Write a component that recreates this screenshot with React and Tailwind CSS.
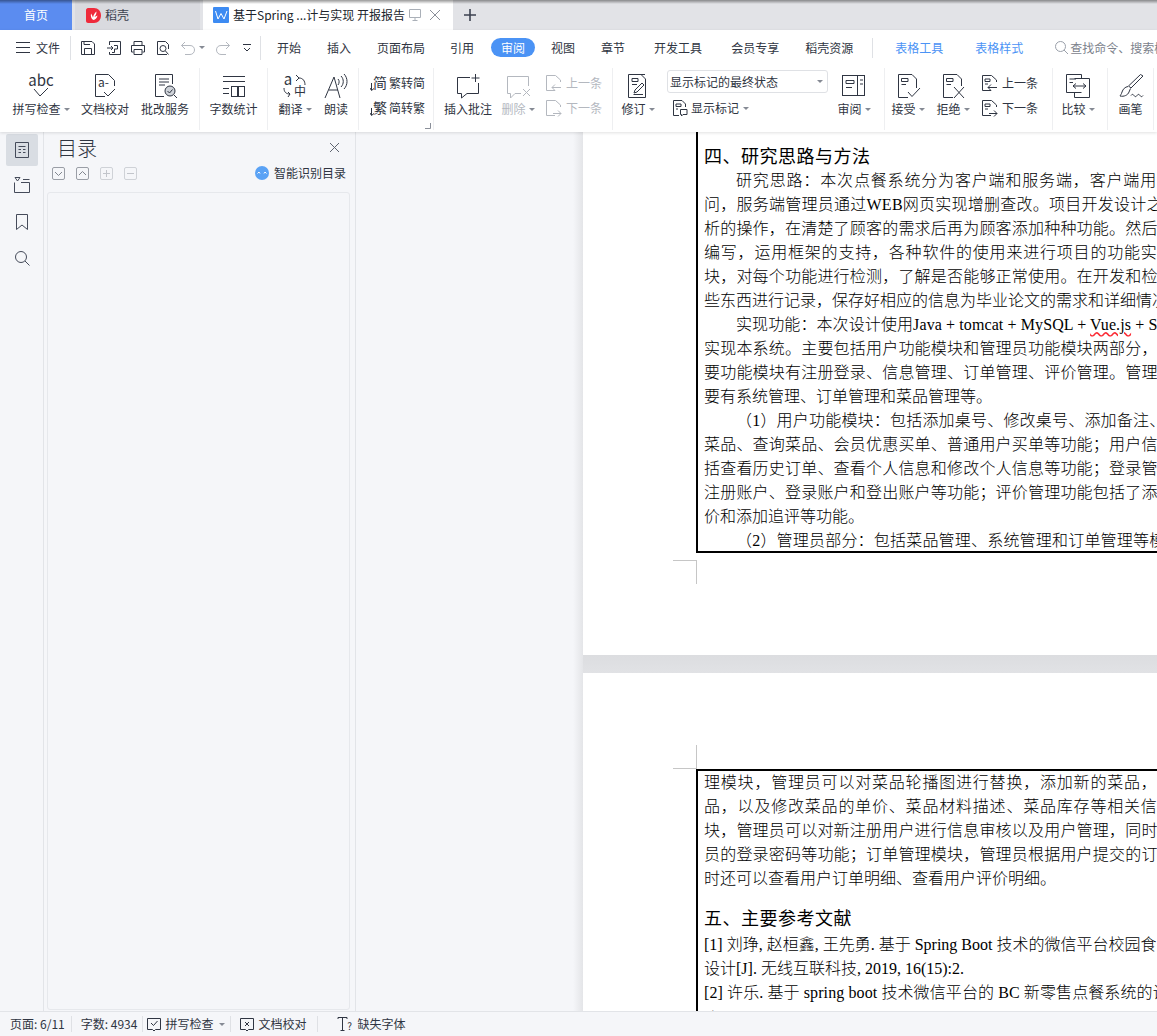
import React from "react";

const Ico = ({ w = 26, h = 26, c = "#2f3542", children, cls = "" }) => (
  <svg width={w} height={h} viewBox={`0 0 ${w} ${h}`} fill="none" stroke={c} strokeWidth="1" className={`shrink-0 ${cls}`}>
    {children}
  </svg>
);
const T = ({ x, y, s = 11, c = "#2f3542", a = "middle", children }) => (
  <text x={x} y={y} fontSize={s} fill={c} stroke="none" textAnchor={a} fontFamily="'Noto Sans CJK SC','Liberation Sans',sans-serif">{children}</text>
);
const Caret = ({ cls = "ml-[3px]" }) => (
  <span className={`inline-block shrink-0 w-0 h-0 border-x-[3px] border-t-[3px] border-x-transparent border-t-[#858a94] ${cls}`} />
);
const Sep = () => <div className="w-px h-[62px] mt-[3px] bg-[#eeeff1] shrink-0" />;

const RBtn = ({ w, label, caret, gray, children }) => (
  <div className={`${w} shrink-0 flex flex-col items-center pt-[8px]`}>
    <div className="h-[26px] flex items-center justify-center">{children}</div>
    <div className={`h-[20px] flex items-center whitespace-nowrap ${gray ? "text-[#b4b8bf]" : "text-[#2f3542]"}`}>
      {label}
      {caret && <Caret />}
    </div>
  </div>
);

const DocBase = ({ c = "#2f3542" }) => (
  <path d="M13 23.5H3.5V1.5H16.5L22.5 7.5V13" stroke={c} />
);

const IconSpell = () => (
  <Ico>
    <T x={13} y={13} s={15}>abc</T>
    <path d="M6 16L12 23L20 15" />
  </Ico>
);
const IconProof = () => (
  <Ico>
    <DocBase />
    <T x={6} y={14} s={12} a="start">a-</T>
    <path d="M12 19L16 23L23 16" />
  </Ico>
);
const IconService = () => (
  <Ico>
    <path d="M12 23.5H3.5V1.5H20.5V11" />
    <path d="M7 6H17M7 9H17M7 12H13" />
    <circle cx="18" cy="18" r="5" fill="#cfd3d9" />
    <path d="M15.5 18L17.5 20L20.5 16.5M22 22L25 25" />
  </Ico>
);
const IconCount = () => (
  <Ico>
    <path d="M2 3.5H24M2 8.5H24M2 15.5H8M2 20.5H8" />
    <rect x="10.5" y="13.5" width="6" height="10" />
    <rect x="17.5" y="13.5" width="6" height="10" />
  </Ico>
);
const IconTranslate = () => (
  <Ico>
    <T x={6} y={12} s={15}>a</T>
    <T x={18} y={23} s={12}>中</T>
    <path d="M14 8L17 5L14 2M17 5C21 5 23 8 23 12" />
    <path d="M2 15C2 19 4 21 8 21M6 19L8 21L6 24" />
  </Ico>
);
const IconRead = () => (
  <Ico>
    <path d="M2 25L11 4L17 25M6 17H15" />
    <path d="M15 6C16.5 7.5 16.5 10 15 12M18 3C21 6 21 11 18 14M21 1C25 5 25 12 21 16" />
  </Ico>
);
const IconFan = ({ g }) => (
  <Ico w={18} h={20}>
    <T x={10} y={15} s={14}>{g}</T>
    <path d="M1.5 10V17M0 15L1.5 17.5L4 15.5" />
  </Ico>
);
const IconComment = () => (
  <Ico>
    <path d="M15 4.5H2.5V20.5H6.5V25L12 20.5H23.5V10" />
    <path d="M20.5 1V9M16.5 5H24.5" />
  </Ico>
);
const IconDelete = () => (
  <Ico c="#b4b8bf">
    <path d="M16 20.5H10L5.5 25V20.5H2.5V3.5H23.5V13" />
    <path d="M18 16L25 23M25 16L18 23" />
  </Ico>
);
const IconPrevNext = ({ next, c = "#2f3542", lines }) => (
  <Ico w={17} h={18} c={c}>
    <path d="M10 16.5H1.5V1.5H10.5L15.5 6V8" />
    {lines && <path d="M4 5H9V7.5H4ZM4 10H7" />}
    {next ? <path d="M8 14.5H16M13 11.5L16 14.5L13 17.5" /> : <path d="M16 13.5H7M10 10.5L7 13.5L10 16.5" />}
  </Ico>
);
const IconRevise = () => (
  <Ico>
    <path d="M20 1.5H3.5V24.5H20.5V6L16 1.5" />
    <path d="M7 5.5H13V8.5H7ZM7 11.5H12" />
    <path d="M9 20L10 17L17 10L19 12L12 19ZM8.5 21.5H18" />
  </Ico>
);
const IconPanes = () => (
  <Ico>
    <rect x="1.5" y="2.5" width="22" height="20" />
    <path d="M16.5 2.5V22.5M19 7H22M19 11H22" />
    <path d="M5 7.5H13V10.5H5ZM5 14.5H11" />
  </Ico>
);
const IconAccept = () => (
  <Ico>
    <path d="M13 24.5H3.5V1.5H17L21.5 6V15" />
    <path d="M6.5 5.5H13V8.5H6.5ZM6.5 11.5H11" />
    <path d="M13 19L17 23.5L25 15" />
  </Ico>
);
const IconReject = () => (
  <Ico>
    <path d="M13 24.5H3.5V1.5H17L21.5 6V13" />
    <path d="M6.5 5.5H13V8.5H6.5ZM6.5 11.5H11" />
    <path d="M14 14L24 25M24 14L14 25" />
  </Ico>
);
const IconCompare = () => (
  <Ico>
    <path d="M16.5 19.5H1.5V1.5H16.5V5" />
    <path d="M9.5 5.5H24.5V24.5H9.5V19" />
    <path d="M4.5 6H11M4.5 9.5H8" />
    <path d="M8 13H21M11 10.5L8 13L11 15.5M18 10.5L21 13L18 15.5" />
  </Ico>
);
const IconBrush = () => (
  <Ico>
    <path d="M22.5 1.5L25 3L13 15L10.5 13Z" />
    <path d="M10 13.5C7 14 5 16 4 19C3.5 21 2.5 22 2 23C6 24 10 22 11 19L12.5 15.5" />
    <path d="M13 22.5C14 21 15 21 16 22.5C17 24 18 24 19 22.5C20 21 21 21 22 22.5C23 24 24 24 25 22.5" />
  </Ico>
);

const MenuTab = ({ ml, children, blue }) => (
  <span className={`${ml} shrink-0 whitespace-nowrap ${blue ? "text-[#4b93f5]" : "text-[#2f3542]"}`}>{children}</span>
);

const Ribbon = () => (
  <div className="relative z-10 shrink-0 bg-white shadow-[0_1px_3px_rgba(0,0,0,0.12)] h-[102px] text-[12px] overflow-hidden">
    <div className="h-[35px] flex items-center pl-[16px]">
      <svg width="14" height="11" viewBox="0 0 14 11" fill="none" stroke="#2f3542" className="shrink-0"><path d="M0 .5H14M0 5.5H14M0 10.5H14" /></svg>
      <span className="ml-[6px] shrink-0 whitespace-nowrap text-[#2f3542]">文件</span>
      <div className="ml-[10px] w-px h-[24px] shrink-0 bg-[#dfe1e5]" />
      <div className="ml-[9px] shrink-0 flex items-center">
        <Ico w={16} h={16}><path d="M1.5 1.5H12L14.5 4V14.5H1.5ZM4.5 14.5V8.5H11.5V14.5M4 1.5V4.5H10" /></Ico>
        <Ico w={16} h={16} cls="ml-[10px]"><path d="M3.5 5V1.5H14.5V14.5H3.5V12M1 8H7M5 6L7 8L5 10M8 5.5H11.5V9H8.5V12.5H6" /></Ico>
        <Ico w={16} h={16} cls="ml-[8px]"><path d="M4 5V1.5H12V5M3.5 12H1.5V5.5H14.5V12H12.5M4 9.5H12V14.5H4Z" /></Ico>
        <Ico w={16} h={16} cls="ml-[9px]"><path d="M12 14.5H2.5V1.5H10.5L13.5 4.5V9" /><circle cx="8" cy="8.5" r="3" /><path d="M10.5 11L13.5 14.5" /></Ico>
        <Ico w={16} h={16} c="#b4b8bf" cls="ml-[9px]"><path d="M5 2L1.5 5.5L5 9M1.5 5.5H10C13 5.5 14.5 7.5 14.5 10C14.5 12.5 12.5 14.5 10 14.5H5" /></Ico>
        <Caret cls="ml-[3px]" />
        <Ico w={16} h={16} c="#b4b8bf" cls="ml-[10px]"><path d="M11 2L14.5 5.5L11 9M14.5 5.5H6C3 5.5 1.5 7.5 1.5 10C1.5 12.5 3.5 14.5 6 14.5H11" /></Ico>
        <Ico w={10} h={10} c="#2f3542" cls="ml-[11px]"><path d="M1 1.5H9M2 5L5 8L8 5" /></Ico>
      </div>
      <div className="ml-[8px] w-px h-[24px] shrink-0 bg-[#dfe1e5]" />
      <MenuTab ml="ml-[16px]">开始</MenuTab>
      <MenuTab ml="ml-[26px]">插入</MenuTab>
      <MenuTab ml="ml-[26px]">页面布局</MenuTab>
      <MenuTab ml="ml-[25px]">引用</MenuTab>
      <span className="ml-[17px] shrink-0 w-[44px] h-[19px] rounded-full bg-[#4b93f5] text-white flex items-center justify-center">审阅</span>
      <MenuTab ml="ml-[16px]">视图</MenuTab>
      <MenuTab ml="ml-[26px]">章节</MenuTab>
      <MenuTab ml="ml-[29px]">开发工具</MenuTab>
      <MenuTab ml="ml-[29px]">会员专享</MenuTab>
      <MenuTab ml="ml-[26px]">稻壳资源</MenuTab>
      <div className="ml-[19px] w-px h-[20px] bg-[#dfe1e5] shrink-0" />
      <MenuTab ml="ml-[22px]" blue>表格工具</MenuTab>
      <MenuTab ml="ml-[32px]" blue>表格样式</MenuTab>
      <Ico w={15} h={15} c="#9aa0aa" cls="ml-[31px]"><circle cx="6.5" cy="6.5" r="5" /><path d="M10 10L14 14" /></Ico>
      <span className="ml-[1px] shrink-0 text-[#7c828c] whitespace-nowrap">查找命令、搜索模板</span>
    </div>
    <div className="h-[67px] flex items-start">
      <div className="w-[9px] shrink-0" />
      <RBtn w="w-[64px]" label="拼写检查" caret><IconSpell /></RBtn>
      <RBtn w="w-[64px]" label="文档校对"><IconProof /></RBtn>
      <RBtn w="w-[56px]" label="批改服务"><IconService /></RBtn>
      <div className="w-[6px] shrink-0" />
      <Sep />
      <RBtn w="w-[67px]" label="字数统计"><IconCount /></RBtn>
      <Sep />
      <RBtn w="w-[54px]" label="翻译" caret><IconTranslate /></RBtn>
      <RBtn w="w-[28px]" label="朗读"><IconRead /></RBtn>
      <div className="w-[8px] shrink-0" />
      <Sep />
      <div className="relative w-[74px] shrink-0 pl-[11px] pt-[8px] text-[#2f3542]">
        <div className="h-[20px] flex items-center whitespace-nowrap"><IconFan g="简" /><span className="ml-[1px]">繁转简</span></div>
        <div className="h-[20px] mt-[5px] flex items-center whitespace-nowrap"><IconFan g="繁" /><span className="ml-[1px]">简转繁</span></div>
        <svg width="6" height="6" viewBox="0 0 6 6" fill="none" stroke="#8a8f99" className="absolute left-[66px] top-[58px]"><path d="M5.5 0V5.5H0" /></svg>
      </div>
      <Sep />
      <RBtn w="w-[68px]" label="插入批注"><IconComment /></RBtn>
      <RBtn w="w-[32px]" label="删除" caret gray><IconDelete /></RBtn>
      <div className="w-[78px] shrink-0 pl-[11px] pt-[8px] text-[#b4b8bf]">
        <div className="h-[20px] flex items-center whitespace-nowrap"><IconPrevNext c="#b4b8bf" /><span className="ml-[4px]">上一条</span></div>
        <div className="h-[20px] mt-[5px] flex items-center whitespace-nowrap"><IconPrevNext next c="#b4b8bf" /><span className="ml-[4px]">下一条</span></div>
      </div>
      <Sep />
      <RBtn w="w-[50px]" label="修订" caret><IconRevise /></RBtn>
      <div className="w-[172px] shrink-0 pl-[4px] pt-[5px] text-[#2f3542]">
        <div className="w-[161px] h-[23px] rounded-[3px] border border-[#dfe1e5] flex items-center pl-[2px] pr-[4px] justify-between whitespace-nowrap">
          显示标记的最终状态
          <Caret cls="" />
        </div>
        <div className="h-[20px] mt-[5px] pl-[5px] flex items-center whitespace-nowrap">
          <Ico w={16} h={18}><path d="M7 16.5H1.5V1.5H10L13.5 5V8" /><path d="M4 5H9V7.5H4ZM4 10H6" /><path d="M8.5 10.5H15V15.5H11L9.5 17V15.5H8.5Z" /></Ico>
          <span className="ml-[3px]">显示标记</span>
          <Caret cls="ml-[4px]" />
        </div>
      </div>
      <RBtn w="w-[38px]" label="审阅" caret><IconPanes /></RBtn>
      <div className="w-[11px] shrink-0" />
      <Sep />
      <RBtn w="w-[46px]" label="接受" caret><IconAccept /></RBtn>
      <RBtn w="w-[44px]" label="拒绝" caret><IconReject /></RBtn>
      <div className="w-[77px] shrink-0 pl-[6px] pt-[8px] text-[#2f3542]">
        <div className="h-[20px] flex items-center whitespace-nowrap"><IconPrevNext lines /><span className="ml-[4px]">上一条</span></div>
        <div className="h-[20px] mt-[5px] flex items-center whitespace-nowrap"><IconPrevNext next lines /><span className="ml-[4px]">下一条</span></div>
      </div>
      <Sep />
      <RBtn w="w-[50px]" label="比较" caret><IconCompare /></RBtn>
      <div className="w-[4px] shrink-0" />
      <Sep />
      <RBtn w="w-[45px]" label="画笔"><IconBrush /></RBtn>
      <Sep />
    </div>
  </div>
);

const TabBar = () => (
  <div className="relative shrink-0 h-[30px] bg-[#e2e3e7] flex text-[12px]">
    <div className="w-[72px] bg-[#5b8cf0] text-white flex items-center justify-center">首页</div>
    <div className="ml-[3px] w-[125px] bg-[#d9dadf] flex items-center pl-[11px] text-[#3c4250]">
      <svg width="15" height="15" viewBox="0 0 15 15" className="shrink-0">
        <path d="M0 2C0 1 1 0 2 0H8C12 0 15 3 15 7.5C15 12 12 15 8 15H2C1 15 0 14 0 13Z" fill="#ef2b3c" />
        <path d="M7.5 12C5 11 4.5 8 5 5.5C6 7 6.5 8 7 9.5C7.5 7 8.5 5 10.5 3.5C10.5 6 9.5 7.5 8.5 9C9.5 8.5 10.5 8 11.5 7.5C11 10 9.5 11.5 7.5 12Z" fill="#fff" />
      </svg>
      <span className="ml-[4px]">稻壳</span>
    </div>
    <div className="ml-[3px] w-[250px] bg-white flex items-center pl-[10px] text-[#20242c]">
      <svg width="16" height="16" viewBox="0 0 16 16" className="shrink-0">
        <rect width="16" height="16" rx="1" fill="#3d8bf2" />
        <path d="M2.5 4L5 12L8 6.5L11 12L14 4" fill="none" stroke="#fff" strokeWidth="1" />
      </svg>
      <span className="ml-[4px] whitespace-nowrap">基于Spring ...计与实现 开报报告</span>
      <Ico w={14} h={14} c="#aab0b8" cls="ml-[3px]"><path d="M1.5 1.5H12.5V9.5H1.5ZM7 9.5V12.5M4.5 12.5H9.5" /></Ico>
      <Ico w={12} h={12} c="#8a8f99" cls="ml-[7px]"><path d="M1 1L11 11M11 1L1 11" /></Ico>
    </div>
    <div className="ml-[11px] flex items-center">
      <Ico w={12} h={12} c="#3c4250"><path d="M6 0V12M0 6H12" strokeWidth="1.6" /></Ico>
    </div>
    <div className="absolute inset-x-0 top-0 h-[4px] bg-gradient-to-b from-[#00000066] to-transparent" />
  </div>
);

const SmallBtn = ({ children, c, ml }) => (
  <div className={`${ml} w-[13px] h-[13px] rounded-[2px] border flex items-center justify-center ${c}`}>{children}</div>
);

const LeftNav = () => (
  <div className="w-[44px] shrink-0 border-r border-[#e2e4e8] flex flex-col items-center pt-[2px]">
    <div className="w-[32px] h-[32px] rounded-[2px] bg-[#d9dde3] flex items-center justify-center">
      <Ico w={14} h={16} c="#454b5a"><path d="M.5 .5H13.5V15.5H.5ZM3.5 4.5H10.5M3.5 7.5H6M8 7.5H10.5M3.5 10.5H6M8 10.5H10.5" /></Ico>
    </div>
    <Ico w={16} h={16} c="#454b5a" cls="mt-[11px]"><path d="M.5 5.5V15.5H15.5V5.5H7M9 2.5H15.5M1 .5H6L3.5 4Z" /></Ico>
    <Ico w={12} h={16} c="#454b5a" cls="mt-[21px]"><path d="M.5 .5H11.5V15.5L6 11L.5 15.5Z" /></Ico>
    <Ico w={16} h={16} c="#454b5a" cls="mt-[20px]"><circle cx="7" cy="7" r="5.5" /><path d="M11 11L15.5 15.5" /></Ico>
  </div>
);

const TocPanel = () => (
  <div className="w-[312px] shrink-0 border-r border-[#e2e4e8] flex flex-col pl-[3px] pr-[5px]">
    <div className="h-[30px] shrink-0 flex items-center justify-between pl-[10px] pr-[10px] pt-[1px]">
      <span className="text-[20px] leading-none text-[#2f3542] font-light">目录</span>
      <Ico w={11} h={11} c="#5f6570"><path d="M1 1L10 10M10 1L1 10" /></Ico>
    </div>
    <div className="h-[22px] shrink-0 flex items-center pl-[5px]">
      <SmallBtn c="border-[#9a9ea6]"><Ico w={9} h={9} c="#80858e"><path d="M1 3L4.5 6.5L8 3" /></Ico></SmallBtn>
      <SmallBtn c="border-[#9a9ea6]" ml="ml-[11px]"><Ico w={9} h={9} c="#80858e"><path d="M1 6L4.5 2.5L8 6" /></Ico></SmallBtn>
      <SmallBtn c="border-[#cfd2d7]" ml="ml-[11px]"><Ico w={9} h={9} c="#c2c5cb"><path d="M4.5 1V8M1 4.5H8" /></Ico></SmallBtn>
      <SmallBtn c="border-[#cfd2d7]" ml="ml-[11px]"><Ico w={9} h={9} c="#c2c5cb"><path d="M1 4.5H8" /></Ico></SmallBtn>
      <svg width="14" height="14" viewBox="0 0 14 14" className="ml-[118px] shrink-0">
        <circle cx="7" cy="7" r="7" fill="#5aa2f5" />
        <path d="M2.5 7.5L4 6L5 7.5M9 7.5L10 6L11.5 7.5" stroke="#fff" fill="none" />
      </svg>
      <span className="ml-[5px] text-[12px] text-[#2f3542] whitespace-nowrap">智能识别目录</span>
    </div>
    <div className="flex-1 mt-[8px] mb-px rounded-[3px] border border-[#e6e8ec]" />
  </div>
);

const p1 = [
  ["pl-[32px] tracking-[0.84px]", "研究思路：本次点餐系统分为客户端和服务端，客户端用"],
  ["tracking-[0.25px]", "问，服务端管理员通过WEB网页实现增删查改。项目开发设计之"],
  ["tracking-[0.2px]", "析的操作，在清楚了顾客的需求后再为顾客添加种种功能。然后"],
  ["tracking-[0.8px]", "编写，运用框架的支持，各种软件的使用来进行项目的功能实"],
  ["tracking-[0.2px]", "块，对每个功能进行检测，了解是否能够正常使用。在开发和检"],
  ["tracking-[0px]", "些东西进行记录，保存好相应的信息为毕业论文的需求和详细情况"],
];
const p2 = [
  ["tracking-[0.2px]", "实现本系统。主要包括用户功能模块和管理员功能模块两部分，"],
  ["tracking-[0.2px]", "要功能模块有注册登录、信息管理、订单管理、评价管理。管理"],
  ["tracking-[0px]", "要有系统管理、订单管理和菜品管理等。"],
  ["pl-[32px] tracking-[0.2px]", "（1）用户功能模块：包括添加桌号、修改桌号、添加备注、"],
  ["tracking-[0.2px]", "菜品、查询菜品、会员优惠买单、普通用户买单等功能；用户信"],
  ["tracking-[0.2px]", "括查看历史订单、查看个人信息和修改个人信息等功能；登录管"],
  ["tracking-[0.2px]", "注册账户、登录账户和登出账户等功能；评价管理功能包括了添"],
  ["tracking-[0px]", "价和添加追评等功能。"],
  ["pl-[32px] tracking-[0.2px]", "（2）管理员部分：包括菜品管理、系统管理和订单管理等模"],
];
const p3 = [
  ["tracking-[0.8px]", "理模块，管理员可以对菜品轮播图进行替换，添加新的菜品，"],
  ["tracking-[0.8px]", "品，以及修改菜品的单价、菜品材料描述、菜品库存等相关信"],
  ["tracking-[0.2px]", "块，管理员可以对新注册用户进行信息审核以及用户管理，同时"],
  ["tracking-[0.2px]", "员的登录密码等功能；订单管理模块，管理员根据用户提交的订"],
  ["tracking-[0px]", "时还可以查看用户订单明细、查看用户评价明细。"],
];
const Line = ({ cls, children }) => <div className={`h-[24px] leading-[24px] whitespace-nowrap ${cls}`}>{children}</div>;

const Heading = ({ children, cls }) => (
  <div className={`h-[24px] leading-[24px] text-[18px] font-normal tracking-[0.5px] text-black whitespace-nowrap ${cls}`}>{children}</div>
);

const Doc = () => (
  <div className="flex-1 min-w-0 overflow-hidden bg-[#e0e1e4] text-[16px] text-black font-light font-['Liberation_Serif','Noto_Sans_CJK_SC',serif]">
    <div className="h-[523px] bg-white pl-[113px] overflow-hidden">
      <div className="w-[520px] h-[421px] border-l-2 border-b-2 border-black pt-[13px] pl-[6px] overflow-hidden">
        <Heading>四、研究思路与方法</Heading>
        {p1.map(([c, t]) => <Line key={t} cls={c}>{t}</Line>)}
        <Line cls="pl-[32px] tracking-[0.1px]">
          实现功能：本次设计使用Java + tomcat + MySQL + <span className="underline decoration-wavy decoration-red-500">Vue.js</span> + Spring
        </Line>
        {p2.map(([c, t]) => <Line key={t} cls={c}>{t}</Line>)}
      </div>
      <div className="-ml-[23px] mt-[7px] w-[24px] h-[24px] border-t border-r border-[#c6c6c6]" />
    </div>
    <div className="h-[18px] bg-gradient-to-b from-[#dcdde0] to-[#e1e2e5]" />
    <div className="bg-white pl-[113px] pt-[72px] h-[400px] overflow-hidden">
      <div className="-ml-[23px] w-[24px] h-[24px] border-b border-r border-[#c6c6c6]" />
      <div className="w-[520px] h-[300px] border-l-2 border-t-2 border-black pl-[6px] overflow-hidden">
        {p3.map(([c, t]) => <Line key={t} cls={c}>{t}</Line>)}
        <Heading cls="mt-[16px]">五、主要参考文献</Heading>
        <Line cls="mt-[2px] tracking-[0px]">[1] 刘琤, 赵桓鑫, 王先勇. 基于 Spring Boot 技术的微信平台校园食</Line>
        <Line cls="tracking-[0px]">设计[J]. 无线互联科技, 2019, 16(15):2.</Line>
        <Line cls="tracking-[0.1px]">[2] 许乐. 基于 spring boot 技术微信平台的 BC 新零售点餐系统的设</Line>
        <Line cls="tracking-[0px]">8).</Line>
      </div>
    </div>
  </div>
);

const StatusBar = () => (
  <div className="shrink-0 h-[25px] bg-[#f5f6f9] border-t border-[#e2e4e8] flex items-center text-[12px] text-[#2f3542] pl-[10px] whitespace-nowrap">
    <span>页面: 6/11</span>
    <div className="ml-[6px] w-px h-[16px] bg-[#dfe1e5]" />
    <span className="ml-[9px]">字数: 4934</span>
    <div className="ml-[5px] w-px h-[16px] bg-[#dfe1e5]" />
    <Ico w={14} h={15} cls="ml-[4px]"><path d="M.5 1.5H13.5V12.5H8.5L7 14L5.5 12.5H.5ZM4 6L6.5 8.5L10.5 4" /></Ico>
    <span className="ml-[4px]">拼写检查</span>
    <Caret cls="ml-[6px]" />
    <div className="ml-[5px] w-px h-[16px] bg-[#dfe1e5]" />
    <Ico w={14} h={15} cls="ml-[9px]"><path d="M.5 1.5H13.5V12.5H8.5L7 14L5.5 12.5H.5ZM5 5L9 9M9 5L5 9" /></Ico>
    <span className="ml-[4px]">文档校对</span>
    <div className="ml-[11px] w-px h-[16px] bg-[#dfe1e5]" />
    <Ico w={16} h={16} cls="ml-[19px]"><path d="M1 3V1.5H10V3M5.5 1.5V14M3.5 14.5H7.5" /><T x={12.5} y={14} s={10}>?</T></Ico>
    <span className="ml-[4px]">缺失字体</span>
  </div>
);

export default function App() {
  return (
    <div className="h-screen w-full flex flex-col overflow-hidden bg-[#f5f6f9] font-['Noto_Sans_CJK_SC','Liberation_Sans',sans-serif]">
      <TabBar />
      <Ribbon />
      <div className="flex-1 min-h-0 flex">
        <LeftNav />
        <TocPanel />
        <div className="w-[227px] shrink-0 flex justify-end">
          <div className="w-[10px] bg-gradient-to-r from-transparent to-[#e4e5e8]" />
        </div>
        <Doc />
      </div>
      <StatusBar />
    </div>
  );
}
